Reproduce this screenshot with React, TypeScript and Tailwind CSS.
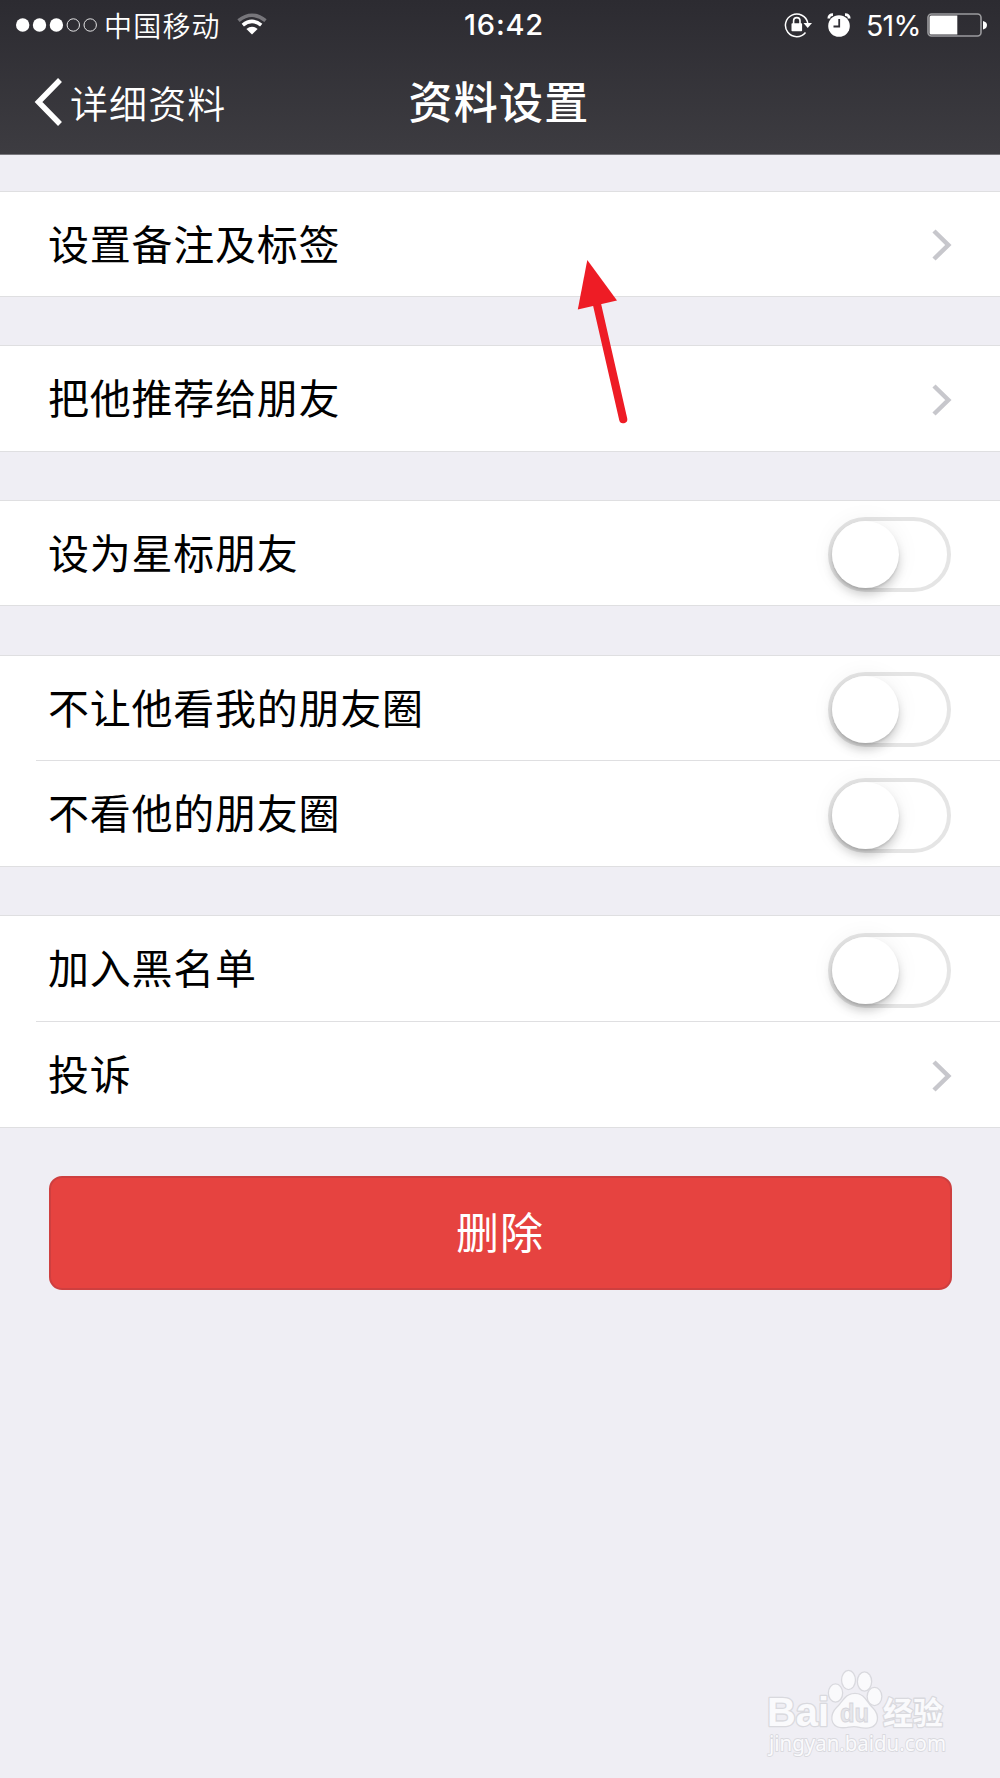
import type { ReactNode } from 'react';

function Chevron() {
  return (
    <svg className="mt-[2px] h-8 w-5 shrink-0" viewBox="0 0 20 32" fill="none" stroke="#c7c7cc" strokeWidth="4.5">
      <path d="M2 2 L16.300 16 L2 30" />
    </svg>
  );
}

function Toggle() {
  return (
    <span className="mt-[3px] mr-px flex h-[75px] w-[123px] shrink-0 items-center rounded-full border-4 border-[#e5e5e5] bg-white">
      <span className="h-[67px] w-[67px] shrink-0 rounded-full bg-white shadow-[0_7px_10px_rgba(0,0,0,0.17),0_2px_2px_rgba(0,0,0,0.1),0_0_24px_rgba(0,0,0,0.06)]" />
    </span>
  );
}

function Row({ label, short = false, children }: { label: string; short?: boolean; children: ReactNode }) {
  return (
    <div className={`flex items-center justify-between px-12 ${short ? 'h-[104px]' : 'h-[105px]'}`}>
      <span className="mb-[5px] text-[41px] leading-[60px] tracking-[0.75px] text-black">{label}</span>
      {children}
    </div>
  );
}

function Group({ children, className }: { children: ReactNode; className: string }) {
  return <section className={`border-y border-[#dfdfe1] bg-white ${className}`}>{children}</section>;
}

function Divider() {
  return <div className="ml-9 h-px bg-[#dfdfe1]" />;
}

function StatusBar() {
  return (
    <div className="grid h-[50px] grid-cols-[1fr_auto_1fr] items-center pr-[13px] pl-4">
      <div className="flex items-center">
        <svg className="h-[14px] w-[82px]" viewBox="0 0 82 14" fill="#fff">
          <circle cx="6.7" cy="7" r="6.7" />
          <circle cx="23.5" cy="7" r="6.7" />
          <circle cx="40.4" cy="7" r="6.7" />
          <g fill="none" stroke="#e4e4e5" strokeWidth="1">
            <circle cx="57.3" cy="7" r="6.2" />
            <circle cx="74.2" cy="7" r="6.2" />
          </g>
        </svg>
        <span className="mb-px ml-[6px] text-[28px] leading-[42px] font-[350] tracking-[1.2px]">中国移动</span>
        <svg className="mb-[2px] ml-4 h-[22px] w-[30px]" viewBox="0 0 30 22" fill="none" strokeWidth="3.6">
          <path d="M1.5 7.7 Q15 -3.2 28.5 7.7" stroke="#77767b" />
          <path d="M5.8 12.2 Q15 4.7 24.2 12.2" stroke="#fff" />
          <path d="M9.4 16 Q15 11.4 20.6 16 L15 21.4 Z" fill="#fff" />
        </svg>
      </div>
      <span className="ml-[5px] font-[Inter] text-[29px] leading-[40px] font-medium tracking-[0.8px]">16:42</span>
      <div className="flex items-center justify-end">
        <svg className="h-[26px] w-[30px]" viewBox="0 0 30 26" fill="none">
          <path d="M21.5 20.5 A11.3 11.3 0 1 1 23.8 11" stroke="#fff" strokeWidth="1.5" />
          <path d="M19.5 11 H28 L23.7 16 Z" fill="#fff" />
          <rect x="7.5" y="11.2" width="10.6" height="8" rx="0.8" fill="#fff" />
          <path d="M9.6 12 V8.8 A3.2 3.2 0 0 1 16 8.8 V12" stroke="#fff" strokeWidth="1.6" />
        </svg>
        <svg className="mb-px ml-[13px] h-6 w-6" viewBox="0 0 24 24" fill="none">
          <circle cx="12" cy="13" r="10.8" fill="#fff" />
          <path d="M1.8 5.4 C1.8 3 3.500 1.500 6 1.6" stroke="#fff" strokeWidth="2.8" />
          <path d="M22.200 5.4 C22.200 3 20.500 1.500 18 1.6" stroke="#fff" strokeWidth="2.8" />
          <path d="M12.2 6 V13.5 H6.5" stroke="#302f35" strokeWidth="1.8" />
        </svg>
        <span className="mt-px ml-[15px] font-[Inter] text-[28.5px] leading-[40px] tracking-[-0.6px]">51%</span>
        <svg className="ml-[6px] h-6 w-[60px]" viewBox="1 0 60 24">
          <rect x="2" y="1" width="53" height="22" rx="3.5" fill="none" stroke="#9b9b9e" strokeWidth="1.6" />
          <path d="M5 2.5 H31.3 V21.5 H5 Q3.5 21.5 3.5 20 V4 Q3.5 2.5 5 2.5 Z" fill="#fff" />
          <path d="M57 8 Q61 9 61 12 Q61 15.500 57 16.500 Z" fill="#fff" />
        </svg>
      </div>
    </div>
  );
}

function NavBar() {
  return (
    <div className="grid h-[104px] grid-cols-[1fr_auto_1fr] items-center pr-[36px] pl-[34px]">
      <div className="flex items-center">
        <svg className="h-12 w-[29px]" viewBox="0 0 29 48" fill="none" stroke="#fff" strokeWidth="5.500">
          <path d="M26 2 L4.500 24 L26 46" />
        </svg>
        <span className="mb-px ml-[7px] text-[38px] leading-[56px] font-[350] tracking-[1.1px]">详细资料</span>
      </div>
      <h1 className="mb-[5px] text-[44px] leading-[64px] font-medium tracking-[1.3px]">资料设置</h1>
    </div>
  );
}

function Arrow() {
  return (
    <svg className="pointer-events-none absolute top-[258px] left-[574px] h-[170px] w-[60px]" viewBox="0 0 60 170">
      <path d="M22 42 L49.200 161.200" stroke="#ee1c25" strokeWidth="8.200" strokeLinecap="round" />
      <path d="M13.300 2 L43 42.500 L3.800 51.500 Z" fill="#ee1c25" />
    </svg>
  );
}

function Watermark() {
  return (
    <svg className="absolute top-[1664px] left-[760px] h-[96px] w-[200px]" viewBox="0 0 200 96">
      <g fill="#fafafc" stroke="#d9d9de" strokeWidth="2.600" paintOrder="stroke" strokeLinejoin="round">
        <text x="7" y="61.500" fontFamily="Liberation Sans" fontWeight="700" fontSize="40" textLength="62" lengthAdjust="spacingAndGlyphs">Bai</text>
        <ellipse cx="75.500" cy="29" rx="6.500" ry="8.500" />
        <ellipse cx="88.500" cy="16" rx="6.300" ry="9" />
        <ellipse cx="104.500" cy="17.500" rx="6.500" ry="9" />
        <ellipse cx="114.500" cy="32.500" rx="6.700" ry="8.500" />
        <path d="M95 30 C104 30 106 38 112 44 C120 52 118 63 107 63.500 C101 64 99 62 94 62 C89 62 87 63.500 81 63 C71 62 70 51 77 44 C84 37 86 30 95 30 Z" />
        <text x="123" y="59.500" fontFamily="Noto Sans CJK SC" fontWeight="700" fontSize="31" textLength="60" lengthAdjust="spacingAndGlyphs">经验</text>
        <text x="9" y="86.500" fontFamily="Noto Sans" fontSize="22" strokeWidth="1.800" textLength="177" lengthAdjust="spacingAndGlyphs">jingyan.baidu.com</text>
      </g>
      <text x="80" y="58" fontFamily="Liberation Sans" fontWeight="700" fontSize="25" fill="#e6e6ea" stroke="#d5d5db" strokeWidth="0.800" textLength="29" lengthAdjust="spacingAndGlyphs">du</text>
    </svg>
  );
}

export default function App() {
  return (
    <div className="relative h-[1778px] w-[1000px] overflow-hidden bg-[#efeef4] font-['Noto_Sans_CJK_SC',sans-serif]">
      <header className="h-[155px] border-b border-[#78777c] bg-linear-to-b from-[#2c2b31] to-[#3d3c41] text-white">
        <StatusBar />
        <NavBar />
      </header>
      <main>
        <Group className="mt-9">
          <Row label="设置备注及标签" short><Chevron /></Row>
        </Group>
        <Group className="mt-12">
          <Row label="把他推荐给朋友"><Chevron /></Row>
        </Group>
        <Group className="mt-12">
          <Row label="设为星标朋友" short><Toggle /></Row>
        </Group>
        <Group className="mt-[49px]">
          <Row label="不让他看我的朋友圈" short><Toggle /></Row>
          <Divider />
          <Row label="不看他的朋友圈"><Toggle /></Row>
        </Group>
        <Group className="mt-12">
          <Row label="加入黑名单"><Toggle /></Row>
          <Divider />
          <Row label="投诉"><Chevron /></Row>
        </Group>
        <button className="mx-auto mt-12 block h-[114px] w-[903px] rounded-[13px] border-2 border-[#ce3f3f] bg-[#e64340] pb-[6px] text-[43px] leading-[60px] tracking-[1px] text-white">
          删除
        </button>
      </main>
      <Arrow />
      <Watermark />
    </div>
  );
}
